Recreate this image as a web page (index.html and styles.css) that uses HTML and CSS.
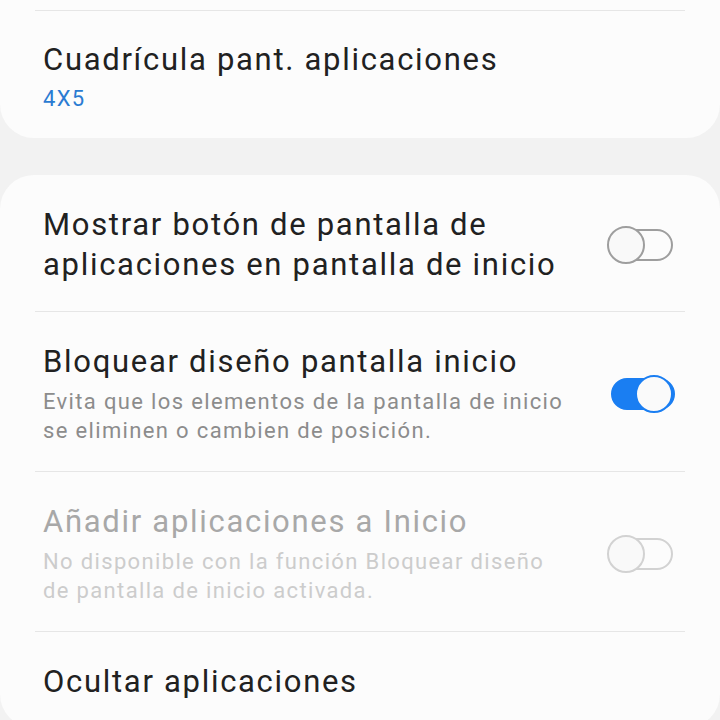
FILE: index.html
```html
<!DOCTYPE html>
<html lang="es">
<head>
    <meta charset="UTF-8">
    <title>Ajustes de la pantalla Inicio</title>
    <link rel="stylesheet" href="styles.css">
</head>
<body>
    <!-- First card: only its bottom end is on screen -->
    <div class="card card-top">
        <div class="row row-first">
            <div class="text">
                <div class="title">Cuadrícula pant. aplicaciones</div>
                <div class="value">4X5</div>
            </div>
        </div>
    </div>

    <div class="card">
        <div class="row">
            <div class="text">
                <div class="title">Mostrar botón de pantalla de aplicaciones en pantalla de inicio</div>
            </div>
            <div class="switch">
                <div class="track"></div>
                <div class="knob"></div>
            </div>
        </div>

        <div class="row">
            <div class="text">
                <div class="title">Bloquear diseño pantalla inicio</div>
                <div class="summary">Evita que los elementos de la pantalla de inicio se eliminen o cambien de posición.</div>
            </div>
            <div class="switch on">
                <div class="track"></div>
                <div class="knob"></div>
            </div>
        </div>

        <div class="row disabled">
            <div class="text">
                <div class="title">Añadir aplicaciones a Inicio</div>
                <div class="summary">No disponible con la función Bloquear diseño de pantalla de inicio activada.</div>
            </div>
            <div class="switch">
                <div class="track"></div>
                <div class="knob"></div>
            </div>
        </div>

        <div class="row last">
            <div class="text">
                <div class="title">Ocultar aplicaciones</div>
            </div>
        </div>
    </div>
</body>
</html>
```

FILE: styles.css
```css
/* Page */
body {
    margin: 0;
    background-color: #f2f2f2;
    font-family: Roboto, "Noto Sans", sans-serif;
    overflow: hidden;
}

/* Cards */
.card {
    background-color: #fcfcfc;
    border-radius: 34px;
    padding: 0 35px;
    margin-bottom: 38px;
}

.card-top {
    border-radius: 0 0 34px 34px;
    padding-top: 10px;
    margin-bottom: 37px;
}

/* Rows */
.row {
    display: flex;
    align-items: center;
    justify-content: space-between;
    padding: 30px 12px 26px 8px;
    border-bottom: 1.5px solid #e6e6e6;
}

.row-first {
    border-top: 1.5px solid #e6e6e6;
    border-bottom: none;
    padding-top: 29px;
    padding-bottom: 24px;
}

.row.last {
    border-bottom: none;
}

.text {
    width: 524px;
}

.title {
    font-size: 31px;
    line-height: 40px;
    letter-spacing: 1.7px;
    color: #212121;
}

.value {
    font-size: 22px;
    line-height: 30px;
    letter-spacing: 1.3px;
    margin-top: 4px;
    color: #2a7bd2;
}

.summary {
    font-size: 22px;
    line-height: 29px;
    letter-spacing: 1.35px;
    margin-top: 5px;
    color: #8c8c8c;
}

.disabled .title {
    color: #a8a8a8;
}

.disabled .summary {
    color: #cccccc;
}

/* Switches */
.switch {
    position: relative;
    width: 66px;
    height: 38px;
    flex-shrink: 0;
}

.track {
    position: absolute;
    left: 2px;
    top: 3px;
    width: 60px;
    height: 28px;
    border: 2px solid #9e9e9e;
    border-radius: 18px;
}

.knob {
    position: absolute;
    left: 0;
    top: 0;
    width: 34px;
    height: 34px;
    border: 2px solid #9e9e9e;
    border-radius: 50%;
    background-color: #f9f9f9;
}

.switch.on .track {
    left: 4px;
    background-color: #1a7ef2;
    border-color: #1a7ef2;
}

.switch.on .knob {
    left: auto;
    right: 0;
    border-color: #1a7ef2;
    background-color: #fafafa;
}

.disabled .track,
.disabled .knob {
    border-color: #d2d2d2;
}
```
